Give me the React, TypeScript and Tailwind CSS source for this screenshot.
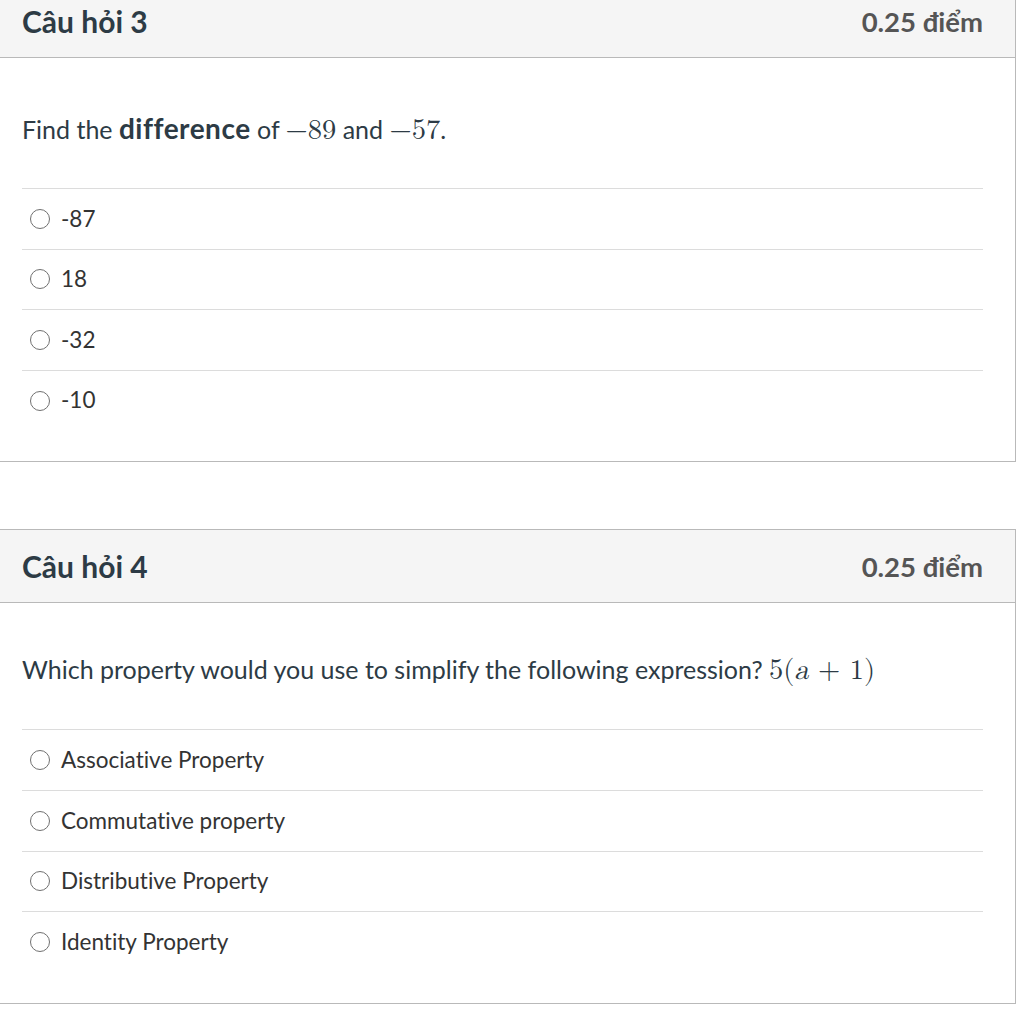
import React from "react";

const Radio = () => (
  <span className="inline-block w-[20px] h-[20px] rounded-full border-[1.5px] border-[#707070] bg-white shrink-0" />
);

const Option = ({ label }: { label: string }) => (
  <div className="h-[60.6px] border-t border-[#dcdcdc] flex items-center pl-[8px] gap-[11px]">
    <Radio />
    <span className="text-[22.5px] text-[#333] leading-none [font-variant-ligatures:no-common-ligatures]">{label}</span>
  </div>
);

const Math = ({ children }: { children: React.ReactNode }) => (
  <span className="text-[28.5px]" style={{ fontFamily: '"Latin Modern Math","DejaVu Serif","Liberation Serif",serif' }}>
    {children}
  </span>
);

const Card = ({
  title,
  question,
  options,
  qClass,
}: {
  title: string;
  question: React.ReactNode;
  options: string[];
  qClass: string;
}) => (
  <div className="w-[1016px] border-t border-r border-b border-[#b9b9b9] bg-white">
    <div className="h-[73px] bg-[#f5f5f5] border-b border-[#b9b9b9] flex items-center justify-between pl-[22px] pr-[32px] pt-[1px]">
      <span className="text-[30px] font-bold text-[#2d3b45]">{title}</span>
      <span className="text-[27.5px] font-bold text-[#555]">0.25 điểm</span>
    </div>
    <div className="pl-[22px] pr-[32px] pb-[31px]">
      <div className={qClass}>{question}</div>
      {options.map((o) => (
        <Option key={o} label={o} />
      ))}
    </div>
  </div>
);

export default function App() {
  return (
    <div className="bg-white min-h-[1036px] -mt-[16px]" style={{ fontFamily: 'Lato, "Noto Sans", sans-serif' }}>
      <Card
        title="Câu hỏi 3"
        qClass="h-[130px] pt-[52px] text-[25px] leading-[36px] text-[#2d3b45]"
        question={
          <>
            Find the <b className="text-[28px] tracking-[0.5px]">difference</b> of <Math>−89</Math> and{" "}
            <Math>−57</Math>.
          </>
        }
        options={["-87", "18", "-32", "-10"]}
      />
      <div className="h-[67px]" />
      <Card
        title="Câu hỏi 4"
        qClass="h-[126px] pt-[48px] text-[25px] leading-[36px] text-[#2d3b45]"
        question={
          <>
            Which property would you use to simplify the following expression?{" "}
            <Math>
              5(<i>a</i> + 1)
            </Math>
          </>
        }
        options={["Associative Property", "Commutative property", "Distributive Property", "Identity Property"]}
      />
    </div>
  );
}
